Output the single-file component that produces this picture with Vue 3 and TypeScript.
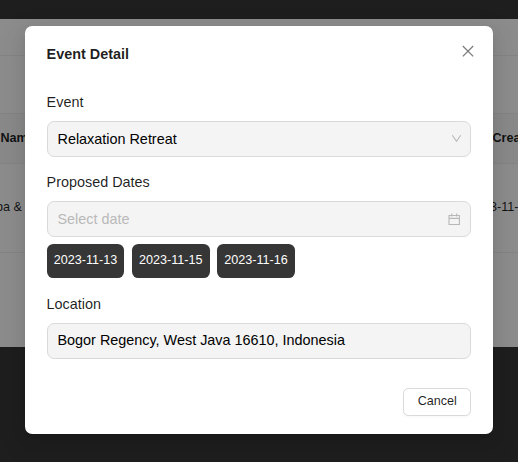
<script setup lang="ts">
import { ref } from 'vue'

const open = ref(true)
const eventName = 'Relaxation Retreat'
const dates: string[] = ['2023-11-13', '2023-11-15', '2023-11-16']
const location = 'Bogor Regency, West Java 16610, Indonesia'

function close(): void {
  open.value = false
}
</script>

<template>
  <div class="page">
    <main class="content">
      <div class="toolbar"></div>
      <div class="filters"></div>
      <div class="row head">
        <span class="cell-left">Name</span>
        <span class="cell-right">Created</span>
      </div>
      <div class="row body">
        <span class="cell-left spa">pa &amp;</span>
        <span class="cell-right date">3-11-13</span>
      </div>
    </main>
    <div v-if="open" class="mask">
      <section class="modal" role="dialog" aria-modal="true">
        <header class="modal-head">
          <h1>Event Detail</h1>
          <button class="close" aria-label="Close" @click="close">
            <svg viewBox="0 0 12 12" width="12" height="12">
              <path d="M0.8 1L11.2 11.4M11.2 1L0.8 11.4" />
            </svg>
          </button>
        </header>
        <div class="field event">
          <label>Event</label>
          <div class="control">
            <span>{{ eventName }}</span>
            <svg class="arrow" viewBox="0 0 11 11" width="11" height="11">
              <path d="M1.3 1.3L5.5 7.2L9.7 1.3" />
            </svg>
          </div>
        </div>
        <div class="field dates">
          <label>Proposed Dates</label>
          <div class="control">
            <span class="placeholder">Select date</span>
            <svg class="calendar" viewBox="0 0 13 13" width="13" height="13">
              <path d="M2 2.5H12.4V11.5H2ZM2 5.4H12.4M4.7 .6V3.6M9.6 .6V3.6" />
            </svg>
          </div>
          <div class="tags">
            <span v-for="date in dates" :key="date" class="tag">{{ date }}</span>
          </div>
        </div>
        <div class="field location">
          <label>Location</label>
          <div class="control"><span>{{ location }}</span></div>
        </div>
        <footer>
          <button class="cancel" @click="close">Cancel</button>
        </footer>
      </section>
    </div>
  </div>
</template>

<style>
body {
  margin: 0;
  overflow: hidden;
}
</style>

<style scoped>
* {
  box-sizing: border-box;
}
.page {
  position: relative;
  height: 462px;
  overflow: hidden;
  padding-top: 19px;
  background: #383838;
  color: rgba(0, 0, 0, 0.88);
  font-family: "Liberation Sans", Arial, sans-serif;
  font-size: 12.6px;
}
.content {
  height: 328px;
  background: #fff;
}
.toolbar {
  height: 37px;
  border-bottom: 1px solid #f0f0f0;
}
.filters {
  height: 58px;
  border-bottom: 1px solid #f0f0f0;
}
.row {
  display: flex;
  align-items: center;
  justify-content: space-between;
  padding-bottom: 2px;
  white-space: nowrap;
  border-bottom: 1px solid #f0f0f0;
}
.head {
  height: 50px;
  background: #fafafa;
  font-weight: 700;
}
.body {
  height: 89px;
}
.cell-left {
  margin-left: 0.5px;
}
.spa {
  margin-left: -4px;
}
.cell-right {
  width: 25.5px;
}
.date {
  width: 28px;
}
.mask {
  position: absolute;
  inset: 0;
  padding: 26px 25px;
  background: rgba(0, 0, 0, 0.45);
}
.modal {
  height: 408px;
  padding: 18px 22px 18px 21.6px;
  border-radius: 7.2px;
  background: #fff;
  box-shadow:
    0 5.4px 14.4px rgba(0, 0, 0, 0.08),
    0 2.7px 5.4px -3.6px rgba(0, 0, 0, 0.12),
    0 8.1px 25.2px 7.2px rgba(0, 0, 0, 0.05);
}
.modal-head {
  display: flex;
  justify-content: space-between;
  height: 47px;
}
h1 {
  margin: 0;
  font-size: 14.4px;
  line-height: 21px;
  font-weight: 700;
}
button {
  font: inherit;
  color: inherit;
}
.close {
  display: flex;
  height: 12px;
  margin: 1px -3px 0 0;
  padding: 0;
  border: 0;
  background: none;
}
svg {
  fill: none;
  stroke: #b8b8b8;
  stroke-width: 1.1;
}
.close svg {
  stroke: #7d7d7d;
  stroke-width: 1.3;
}
.field {
  font-size: 14.4px;
}
.event {
  height: 80px;
}
.dates {
  height: 122px;
}
.location {
  height: 83px;
}
label {
  display: block;
  height: 30px;
  line-height: 22px;
}
.control {
  display: flex;
  align-items: center;
  justify-content: space-between;
  height: 36px;
  padding: 0 10px 0 9.9px;
  border: 1px solid #d9d9d9;
  border-radius: 7.2px;
  background: #f4f4f4;
  color: #000;
}
.location .control {
  padding-bottom: 2px;
}
.arrow {
  margin-right: -2px;
}
.placeholder {
  color: #b9b9b9;
}
.tags {
  display: flex;
  gap: 7.4px;
  margin-top: 7px;
}
.tag {
  height: 34px;
  padding: 0 7.2px;
  border-radius: 6.3px;
  background: #363636;
  color: #fff;
  font-size: 12.6px;
  line-height: 32px;
}
footer {
  display: flex;
  justify-content: flex-end;
  padding-top: 12px;
}
.cancel {
  width: 68px;
  height: 28px;
  padding: 0 0 2px 0.6px;
  border: 1px solid #d9d9d9;
  border-radius: 5.4px;
  background: #fff;
  box-shadow: 0 1.8px 0 rgba(0, 0, 0, 0.02);
}
</style>
